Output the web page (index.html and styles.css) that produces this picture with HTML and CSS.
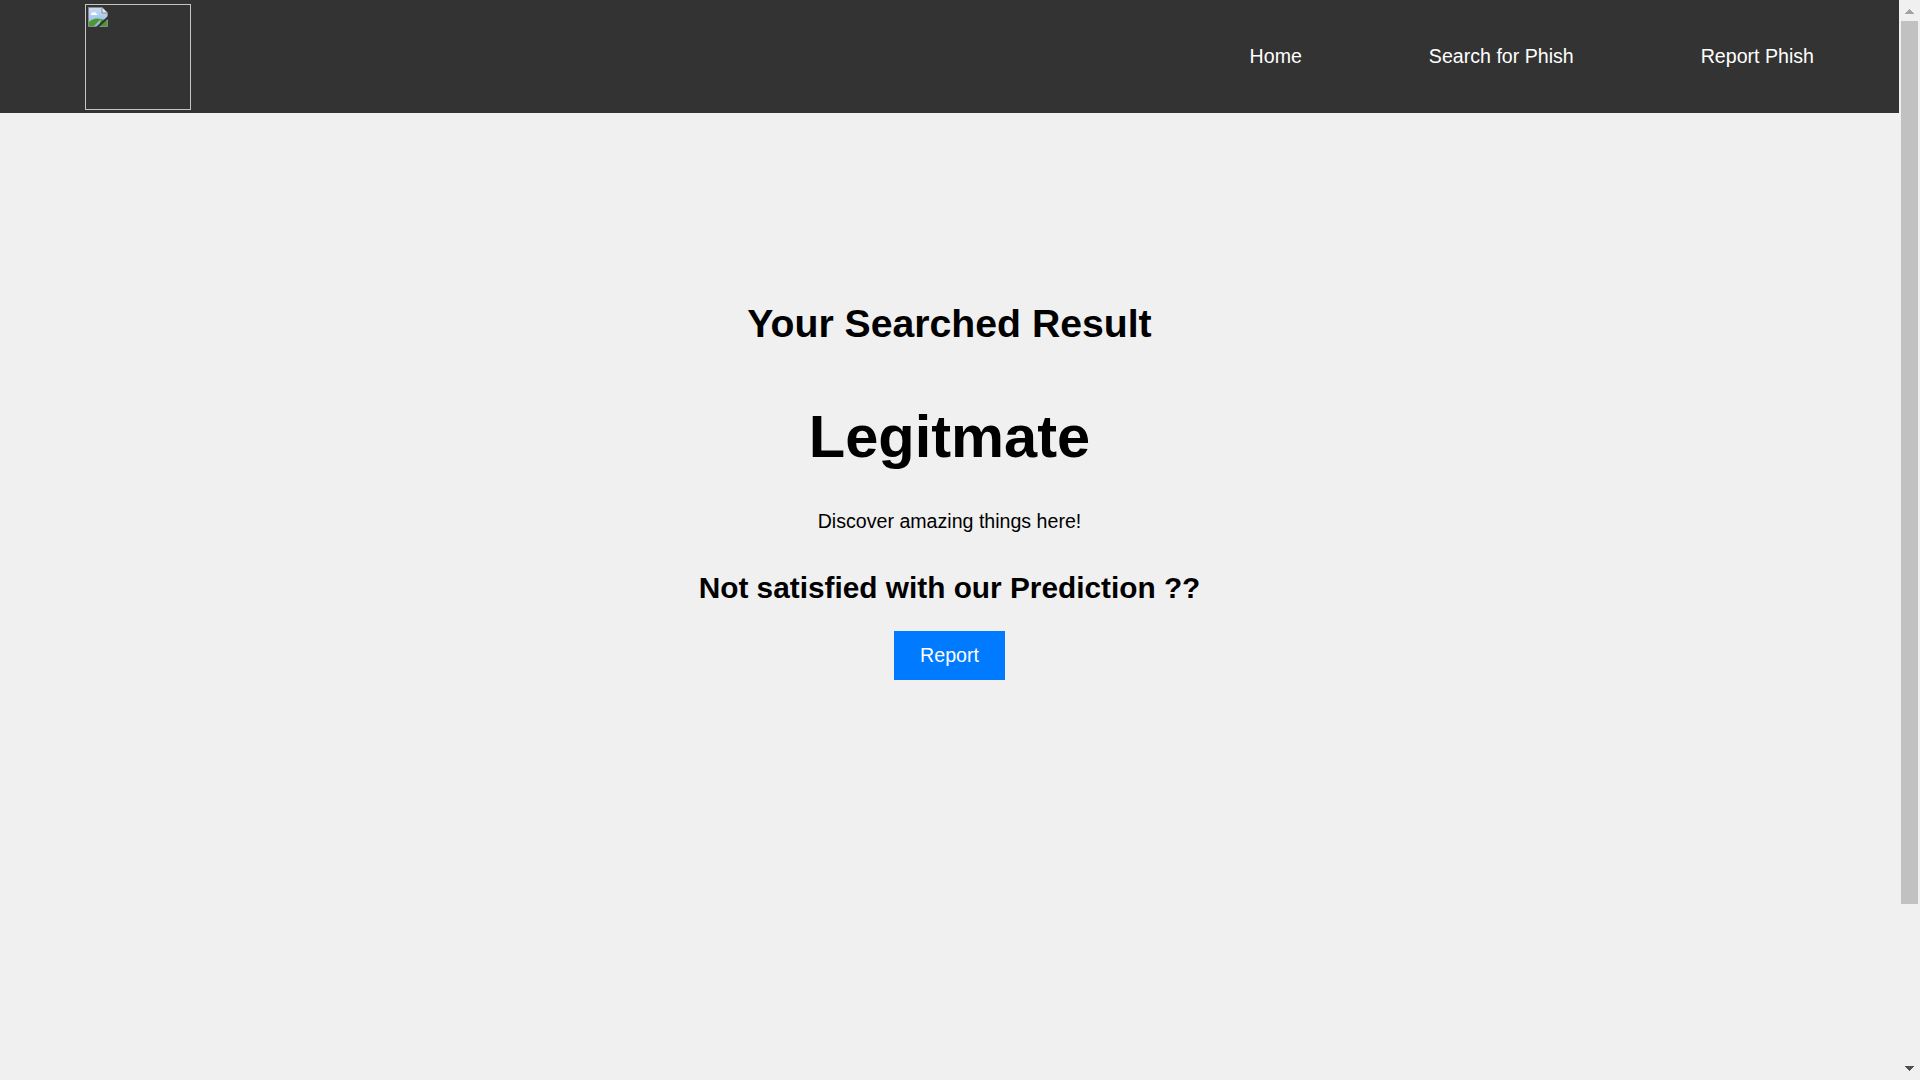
FILE: index.html
```html
<!DOCTYPE html>
<html lang="en" class="root">
<head>
<meta charset="utf-8">
<title>Search Result</title>
<link rel="stylesheet" href="styles.css">
</head>
<body class="page">
  <header class="topbar">
    <div class="logo" role="img" aria-label="logo">
      <svg class="broken-icon" width="20" height="20" viewBox="0 0 20 20">
        <defs>
          <linearGradient id="sky" x1="0" y1="0" x2="0" y2="1">
            <stop offset="0" stop-color="#c7dcf5"/>
            <stop offset="1" stop-color="#8fb6e8"/>
          </linearGradient>
        </defs>
        <path d="M0.5 0.5 H14 L19.5 6 V19.5 H0.5 Z" fill="url(#sky)" stroke="#8a8a8a"/>
        <path d="M14 0.5 V6 H19.5" fill="#e8e8e8" stroke="#8a8a8a"/>
        <path d="M3 7 Q4 4.5 6 5.5 Q7.5 4.5 8.5 6.5 Q10 7 9 8 H3 Z" fill="#ffffff"/>
        <path d="M1 19 V15 Q6 10 13 12 L6 19 Z" fill="#4a9a2c"/>
        <path d="M13 12 Q16 12.5 19 14 V19 H11 Z" fill="#4a9a2c"/>
        <path d="M8 20 L20 9 V12 L11 20 Z" fill="#333333"/>
      </svg>
    </div>
    <nav class="nav">
      <a class="nav-link" href="#">Home</a>
      <a class="nav-link" href="#">Search for Phish</a>
      <a class="nav-link" href="#">Report Phish</a>
    </nav>
  </header>
  <main class="result">
    <h2 class="result-title">Your Searched Result</h2>
    <h1 class="result-value">Legitmate</h1>
    <p class="result-note">Discover amazing things here!</p>
    <h3 class="result-ask">Not satisfied with our Prediction ??</h3>
    <button class="report-btn" type="button">Report</button>
  </main>
  <div class="scrollbar" aria-hidden="true">
    <div class="sb-btn sb-up"></div>
    <div class="sb-track"><div class="sb-thumb"></div></div>
    <div class="sb-btn sb-down"></div>
  </div>
</body>
</html>
```
FILE: styles.css
```css
.root {
  background: #f0f0f0;
  scrollbar-width: none;
}

.page {
  margin: 0;
  padding-right: 21px;
  min-height: 1300px;
  background: #f0f0f0;
  font-family: "Liberation Sans", Arial, sans-serif;
  color: #000000;
}

.topbar {
  display: flex;
  align-items: center;
  height: 113px;
  background: #333333;
}

.logo {
  box-sizing: border-box;
  width: 106px;
  height: 106px;
  margin-left: 85px;
  border: 1px solid #c4c4c4;
  padding: 2px 0 0 2px;
}

.broken-icon {
  display: block;
}

.nav {
  display: flex;
  align-items: center;
  gap: 127px;
  margin-left: auto;
  margin-right: 85px;
}

.nav-link {
  color: #ffffff;
  text-decoration: none;
  font-size: 19.6px;
  line-height: 23px;
}

.result {
  display: flex;
  flex-direction: column;
  align-items: center;
  padding-top: 188px;
  text-align: center;
}

.result-title {
  margin: 0;
  font-size: 39.2px;
  line-height: 45px;
  font-weight: bold;
}

.result-value {
  margin: 57px 0 0;
  font-size: 59.6px;
  line-height: 68px;
  font-weight: bold;
}

.result-note {
  margin: 39px 0 0;
  font-size: 19.6px;
  line-height: 23px;
}

.result-ask {
  margin: 38px 0 0;
  font-size: 29.8px;
  line-height: 34px;
  font-weight: bold;
}

.report-btn {
  margin-top: 26px;
  height: 49px;
  padding: 0 26px;
  border: none;
  border-radius: 0;
  background: #007bff;
  color: #ffffff;
  font-family: "Liberation Sans", Arial, sans-serif;
  font-size: 19.6px;
  line-height: 23px;
  cursor: pointer;
}

/* drawn scrollbar that overlays the right edge of the window */
.scrollbar {
  position: fixed;
  top: 0;
  right: 0;
  width: 21px;
  height: 100vh;
  display: flex;
  flex-direction: column;
  background: #f0f0f0;
}

.sb-btn {
  height: 20px;
  flex: none;
  background-repeat: no-repeat;
  background-size: 5px 5px, 5px 5px;
}

.sb-up {
  background-image:
    linear-gradient(to top left, #a3a3a3 50%, transparent 50%),
    linear-gradient(to top right, #a3a3a3 50%, transparent 50%);
  background-position: 6px 9px, 11px 9px;
}

.sb-down {
  background-image:
    linear-gradient(to bottom left, #505050 50%, transparent 50%),
    linear-gradient(to bottom right, #505050 50%, transparent 50%);
  background-position: 6px 6px, 11px 6px;
}

.sb-track {
  flex: 1;
  padding: 1px 2px 0;
}

.sb-thumb {
  height: 883px;
  background: #c1c1c1;
}
```
